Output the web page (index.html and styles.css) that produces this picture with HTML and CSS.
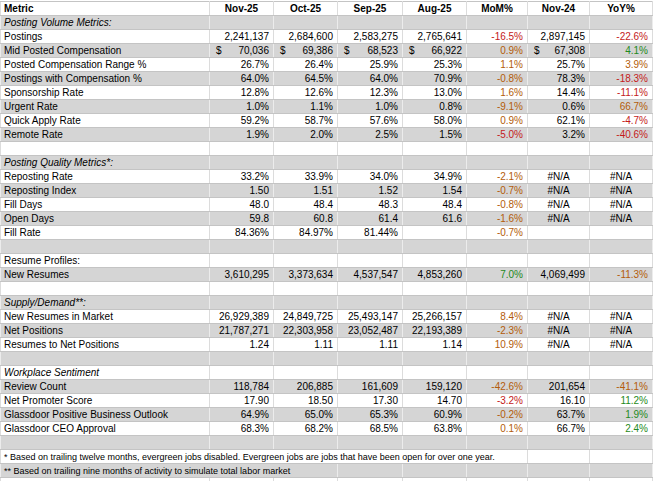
FILE: index.html
```html
<!DOCTYPE html>
<html>
<head>
<meta charset="utf-8">
<link rel="stylesheet" href="styles.css">
</head>
<body>
<div class="sheet">
<table class="grid">
<colgroup>
<col class="c-metric"><col class="c-m"><col class="c-m"><col class="c-w"><col class="c-m"><col class="c-mom"><col class="c-ly"><col class="c-yoy">
</colgroup>
<tbody>
<tr class="head"><td class="lbl">Metric</td><td>Nov-25</td><td>Oct-25</td><td>Sep-25</td><td>Aug-25</td><td>MoM%</td><td>Nov-24</td><td>YoY%</td></tr>
<tr class="g"><td class="lbl sec">Posting Volume Metrics:</td><td></td><td></td><td></td><td></td><td></td><td></td><td></td></tr>
<tr><td class="lbl">Postings</td><td class="n">2,241,137</td><td class="n">2,684,600</td><td class="n">2,583,275</td><td class="n">2,765,641</td><td class="n red">-16.5%</td><td class="n">2,897,145</td><td class="n red">-22.6%</td></tr>
<tr class="g"><td class="lbl">Mid Posted Compensation</td><td class="n"><span class="cur">$</span>70,036</td><td class="n"><span class="cur">$</span>69,386</td><td class="n"><span class="cur">$</span>68,523</td><td class="n"><span class="cur">$</span>66,922</td><td class="n org">0.9%</td><td class="n"><span class="cur">$</span>67,308</td><td class="n grn">4.1%</td></tr>
<tr><td class="lbl">Posted Compensation Range %</td><td class="n">26.7%</td><td class="n">26.4%</td><td class="n">25.9%</td><td class="n">25.3%</td><td class="n org">1.1%</td><td class="n">25.7%</td><td class="n org">3.9%</td></tr>
<tr class="g"><td class="lbl">Postings with Compensation %</td><td class="n">64.0%</td><td class="n">64.5%</td><td class="n">64.0%</td><td class="n">70.9%</td><td class="n org">-0.8%</td><td class="n">78.3%</td><td class="n red">-18.3%</td></tr>
<tr><td class="lbl">Sponsorship Rate</td><td class="n">12.8%</td><td class="n">12.6%</td><td class="n">12.3%</td><td class="n">13.0%</td><td class="n org">1.6%</td><td class="n">14.4%</td><td class="n red">-11.1%</td></tr>
<tr class="g"><td class="lbl">Urgent Rate</td><td class="n">1.0%</td><td class="n">1.1%</td><td class="n">1.0%</td><td class="n">0.8%</td><td class="n org">-9.1%</td><td class="n">0.6%</td><td class="n org">66.7%</td></tr>
<tr><td class="lbl">Quick Apply Rate</td><td class="n">59.2%</td><td class="n">58.7%</td><td class="n">57.6%</td><td class="n">58.0%</td><td class="n org">0.9%</td><td class="n">62.1%</td><td class="n red">-4.7%</td></tr>
<tr class="g"><td class="lbl">Remote Rate</td><td class="n">1.9%</td><td class="n">2.0%</td><td class="n">2.5%</td><td class="n">1.5%</td><td class="n red">-5.0%</td><td class="n">3.2%</td><td class="n red">-40.6%</td></tr>
<tr><td class="lbl"></td><td></td><td></td><td></td><td></td><td></td><td></td><td></td></tr>
<tr class="g"><td class="lbl sec">Posting Quality Metrics*:</td><td></td><td></td><td></td><td></td><td></td><td></td><td></td></tr>
<tr><td class="lbl">Reposting Rate</td><td class="n">33.2%</td><td class="n">33.9%</td><td class="n">34.0%</td><td class="n">34.9%</td><td class="n org">-2.1%</td><td class="c">#N/A</td><td class="c">#N/A</td></tr>
<tr class="g"><td class="lbl">Reposting Index</td><td class="n">1.50</td><td class="n">1.51</td><td class="n">1.52</td><td class="n">1.54</td><td class="n org">-0.7%</td><td class="c">#N/A</td><td class="c">#N/A</td></tr>
<tr><td class="lbl">Fill Days</td><td class="n">48.0</td><td class="n">48.4</td><td class="n">48.3</td><td class="n">48.4</td><td class="n org">-0.8%</td><td class="c">#N/A</td><td class="c">#N/A</td></tr>
<tr class="g"><td class="lbl">Open Days</td><td class="n">59.8</td><td class="n">60.8</td><td class="n">61.4</td><td class="n">61.6</td><td class="n org">-1.6%</td><td class="c">#N/A</td><td class="c">#N/A</td></tr>
<tr><td class="lbl">Fill Rate</td><td class="n">84.36%</td><td class="n">84.97%</td><td class="n">81.44%</td><td></td><td class="n org">-0.7%</td><td></td><td></td></tr>
<tr class="g"><td class="lbl"></td><td></td><td></td><td></td><td></td><td></td><td></td><td></td></tr>
<tr><td class="lbl">Resume Profiles:</td><td></td><td></td><td></td><td></td><td></td><td></td><td></td></tr>
<tr class="g"><td class="lbl">New Resumes</td><td class="n">3,610,295</td><td class="n">3,373,634</td><td class="n">4,537,547</td><td class="n">4,853,260</td><td class="n grn">7.0%</td><td class="n">4,069,499</td><td class="n org">-11.3%</td></tr>
<tr><td class="lbl"></td><td></td><td></td><td></td><td></td><td></td><td></td><td></td></tr>
<tr class="g"><td class="lbl sec">Supply/Demand**:</td><td></td><td></td><td></td><td></td><td></td><td></td><td></td></tr>
<tr><td class="lbl">New Resumes in Market</td><td class="n">26,929,389</td><td class="n">24,849,725</td><td class="n">25,493,147</td><td class="n">25,266,157</td><td class="n org">8.4%</td><td class="c">#N/A</td><td class="c">#N/A</td></tr>
<tr class="g"><td class="lbl">Net Positions</td><td class="n">21,787,271</td><td class="n">22,303,958</td><td class="n">23,052,487</td><td class="n">22,193,389</td><td class="n org">-2.3%</td><td class="c">#N/A</td><td class="c">#N/A</td></tr>
<tr><td class="lbl">Resumes to Net Positions</td><td class="n">1.24</td><td class="n">1.11</td><td class="n">1.11</td><td class="n">1.14</td><td class="n org">10.9%</td><td class="c">#N/A</td><td class="c">#N/A</td></tr>
<tr class="g"><td class="lbl"></td><td></td><td></td><td></td><td></td><td></td><td></td><td></td></tr>
<tr><td class="lbl sec">Workplace Sentiment</td><td></td><td></td><td></td><td></td><td></td><td></td><td></td></tr>
<tr class="g"><td class="lbl">Review Count</td><td class="n">118,784</td><td class="n">206,885</td><td class="n">161,609</td><td class="n">159,120</td><td class="n org">-42.6%</td><td class="n">201,654</td><td class="n org">-41.1%</td></tr>
<tr><td class="lbl">Net Promoter Score</td><td class="n">17.90</td><td class="n">18.50</td><td class="n">17.30</td><td class="n">14.70</td><td class="n red">-3.2%</td><td class="n">16.10</td><td class="n grn">11.2%</td></tr>
<tr class="g"><td class="lbl">Glassdoor Positive Business Outlook</td><td class="n">64.9%</td><td class="n">65.0%</td><td class="n">65.3%</td><td class="n">60.9%</td><td class="n org">-0.2%</td><td class="n">63.7%</td><td class="n grn">1.9%</td></tr>
<tr><td class="lbl">Glassdoor CEO Approval</td><td class="n">68.3%</td><td class="n">68.2%</td><td class="n">68.5%</td><td class="n">63.8%</td><td class="n org">0.1%</td><td class="n">66.7%</td><td class="n grn">2.4%</td></tr>
<tr class="g"><td class="lbl"></td><td></td><td></td><td></td><td></td><td></td><td></td><td></td></tr>
<tr><td class="lbl note" colspan="6">* Based on trailing twelve months, evergreen jobs disabled. Evergreen jobs are jobs that have been open for over one year.</td><td></td><td></td></tr>
<tr class="g"><td class="lbl note" colspan="3">** Based on trailing nine months of activity to simulate total labor market</td><td></td><td></td><td></td><td></td><td></td></tr>
<tr><td class="lbl"></td><td></td><td></td><td></td><td></td><td></td><td></td><td></td></tr>
</tbody>
</table>
</div>
</body>
</html>
```

FILE: styles.css
```css
html, body {
  margin: 0;
  padding: 0;
  background: #ffffff;
}

.sheet {
  padding-top: 1px;
  height: 480px;
  overflow: hidden;
}

.grid {
  border-collapse: collapse;
  table-layout: fixed;
  width: 653px;
  font-family: "Liberation Sans", Arial, Helvetica, sans-serif;
  font-size: 10px;
  color: #000;
}

.c-metric { width: 209px; }
.c-m { width: 64px; }
.c-w { width: 65px; }
.c-mom { width: 61px; }
.c-ly { width: 62px; }
.c-yoy { width: 63px; }

.grid tr {
  height: 14px;
}

.grid td {
  height: 12px;
  padding: 1px 4px 0 4px;
  line-height: 12px;
  white-space: nowrap;
  overflow: hidden;
  border-left: 1px solid #dcdcdc;
  border-right: 1px solid #dcdcdc;
  border-top: 1px solid #c4c4c4;
  border-bottom: 1px solid #c4c4c4;
  text-align: right;
  vertical-align: middle;
}

.grid td.lbl {
  text-align: left;
  padding-left: 3px;
}

.grid tr.g td {
  background: #d5d5d5;
  border-left-color: #ececec;
  border-right-color: #ececec;
}

.head td {
  font-weight: bold;
  text-align: center;
}

.head td.lbl {
  text-align: left;
}

.sec {
  font-style: italic;
}

.grid td.c {
  text-align: center;
}

.cur {
  float: left;
  padding-left: 2px;
}

.grid td.note {
  overflow: visible;
  font-size: 9px;
}

.red { color: #c41a1a; }
.org { color: #b35c0a; }
.grn { color: #1f8a22; }
```
